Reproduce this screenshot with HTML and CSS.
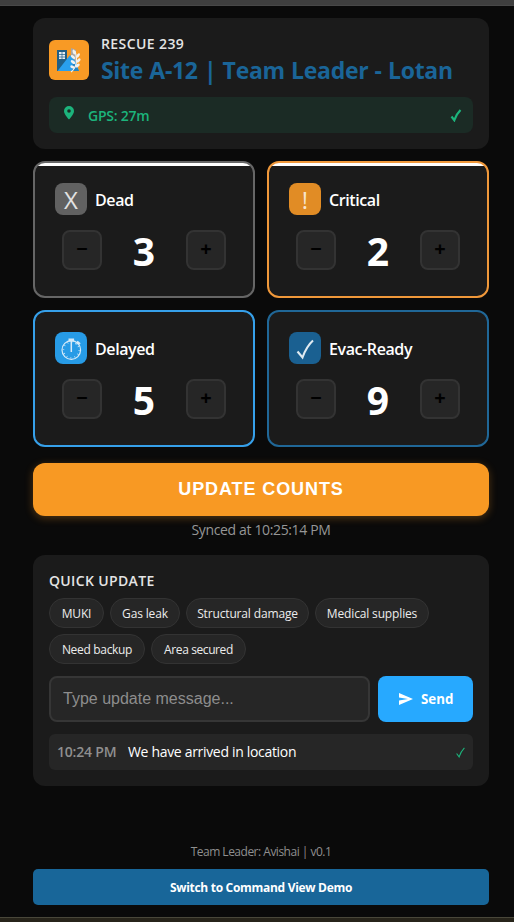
FILE: index.html
```html
<!DOCTYPE html>
<html lang="en">
<head>
<meta charset="utf-8">
<title>Rescue 239</title>
<link rel="stylesheet" href="styles.css">
</head>
<body>
<div class="strip-top"></div>
<main class="app">
  <header class="panel header">
    <div class="brand">
      <svg class="logo" viewBox="0 0 40 40">
        <rect width="40" height="40" rx="6" fill="#f89a25"/>
        <rect x="8" y="10" width="10" height="21" fill="#205f86"/>
        <path d="M10 12h6v7h-6z" fill="#e5edf1"/>
        <path d="M13 12v7M10 14.500h6M10 17h6" stroke="#205f86" stroke-width=".7"/>
        <path d="M22 8l5 2v14l-5-8z" fill="#a9a7a6"/>
        <path d="M8.500 31L21 15l6 7 3 9z" fill="#29a0ee"/>
        <path d="M24 20l6 11h-7z" fill="#2784c0"/>
        <path d="M22 32c5-4 7-11 4-21" fill="none" stroke="#f3f1ee" stroke-width="1.200"/>
        <g fill="#f3f1ee">
          <ellipse cx="25" cy="12" rx="1.300" ry="2.500" transform="rotate(-20 25 12)"/>
          <ellipse cx="24" cy="17" rx="1.400" ry="2.600" transform="rotate(-50 24 17)"/>
          <ellipse cx="29" cy="15.500" rx="1.400" ry="2.600" transform="rotate(35 29 15.500)"/>
          <ellipse cx="24" cy="22" rx="1.400" ry="2.600" transform="rotate(-55 24 22)"/>
          <ellipse cx="29.500" cy="20.500" rx="1.400" ry="2.600" transform="rotate(45 29.500 20.500)"/>
          <ellipse cx="23.500" cy="27" rx="1.400" ry="2.400" transform="rotate(-65 23.500 27)"/>
          <ellipse cx="28.500" cy="25.500" rx="1.400" ry="2.600" transform="rotate(55 28.500 25.500)"/>
        </g>
      </svg>
      <div>
        <div class="unit"><span>RESCUE 239</span></div>
        <h1 class="title">Site A-12 | Team Leader - Lotan</h1>
      </div>
    </div>
    <div class="gps">
      <svg class="pin" viewBox="0 0 10 14"><path fill-rule="evenodd" d="M5 0a5 5 0 0 0-5 5c0 3.600 5 8.500 5 8.500s5-4.900 5-8.500a5 5 0 0 0-5-5zm0 3.200a1.800 1.800 0 1 1 0 3.600 1.800 1.800 0 0 1 0-3.600z" fill="#1cb47c"/></svg>
      <span class="gps-text">GPS: 27m</span>
      <svg class="gps-check" viewBox="0 0 12 13"><path d="M1.500 7.500l2.800 3.700C5.500 7.500 7.500 4 10.500 1" fill="none" stroke="#1cb47c" stroke-width="2.200"/></svg>
    </div>
  </header>

  <section class="grid">
    <article class="card dead lit">
      <div class="card-head"><span class="badge">X</span><span class="label">Dead</span></div>
      <div class="counter"><button class="step">−</button><span class="num">3</span><button class="step">+</button></div>
    </article>
    <article class="card critical lit">
      <div class="card-head"><span class="badge">!</span><span class="label">Critical</span></div>
      <div class="counter"><button class="step">−</button><span class="num">2</span><button class="step">+</button></div>
    </article>
    <article class="card delayed">
      <div class="card-head"><span class="badge">
        <svg width="32" height="32" viewBox="0 0 32 32" fill="none" stroke="#d5eaf8">
          <circle cx="16.300" cy="18" r="9.300" stroke-width="1.200"/>
          <circle cx="16.300" cy="18" r="7.800" stroke-width="1.600" stroke-dasharray=".7 3.384"/>
          <path d="M16.300 8v12" stroke-width="1.500"/>
          <path d="M13.500 8h5.600" stroke-width="2.800"/>
          <path d="M21.500 12.300l2-2" stroke-width="1.200"/>
          <path d="M22 9.500l3 2.500" stroke-width="2.200"/>
        </svg></span><span class="label">Delayed</span></div>
      <div class="counter"><button class="step">−</button><span class="num">5</span><button class="step">+</button></div>
    </article>
    <article class="card evac">
      <div class="card-head"><span class="badge">
        <svg width="32" height="32" viewBox="0 0 32 32"><path d="M8.500 19.500l5 6C16 18.500 19 13 24 8.500" fill="none" stroke="#dfeaf1" stroke-width="2.100"/></svg></span><span class="label">Evac-Ready</span></div>
      <div class="counter"><button class="step">−</button><span class="num">9</span><button class="step">+</button></div>
    </article>
  </section>

  <button class="update">UPDATE COUNTS</button>
  <div class="synced">Synced at 10:25:14 PM</div>

  <section class="panel quick">
    <h2 class="quick-title">QUICK UPDATE</h2>
    <div class="chips">
      <span class="chip c1">MUKI</span><span class="chip c2">Gas leak</span><span class="chip c3">Structural damage</span><span class="chip c4">Medical supplies</span><span class="chip c5">Need backup</span><span class="chip c6">Area secured</span>
    </div>
    <div class="compose">
      <input class="field" placeholder="Type update message...">
      <button class="send"><svg width="14" height="12" viewBox="0 0 14 12"><path d="M0 0l14 6-14 6V7.400L9 6 0 4.600z" fill="#fff"/></svg><span>Send</span></button>
    </div>
    <div class="log">
      <span class="time">10:24 PM</span><span class="msg">We have arrived in location</span>
      <svg class="log-check" width="9" height="11" viewBox="0 0 9 11"><path d="M.6 6.500l2.500 3.400C4.300 6 6 3.300 8.400.8" fill="none" stroke="#1cb47c" stroke-width="1.100"/></svg>
    </div>
  </section>

  <footer class="footer">
    <div class="version">Team Leader: Avishai | v0.1</div>
    <button class="switch">Switch to Command View Demo</button>
  </footer>
</main>
<div class="strip-bottom"></div>
</body>
</html>
```
FILE: styles.css
```css
* { box-sizing: border-box; }
body {
  margin: 0;
  height: 922px;
  overflow: hidden;
  display: flex;
  flex-direction: column;
  background: #0a0a0a;
  color: #fff;
  font-family: "Open Sans", "Noto Sans", sans-serif;
}
button { font-family: inherit; border: 0; padding: 0; }
svg { display: block; }
span, .synced, .version, h1, h2 { white-space: nowrap; }
.strip-top { height: 6px; flex: none; background: #3f3f3f; border-bottom: 1px solid #484848; }
.strip-bottom { height: 5px; flex: none; background: #27241a; border-top: 1px solid #49473a; }
.app { flex: 1; display: flex; flex-direction: column; padding: 12px 25px 12px 33px; }
.panel { background: #1b1b1b; border-radius: 12px; padding: 16px; }

.header { height: 131px; }
.brand { display: flex; align-items: center; gap: 12px; height: 51px; }
.logo { width: 40px; height: 40px; }
.unit { font-size: 14px; line-height: 19px; font-weight: 600; color: #e4e4e4; letter-spacing: .4px; }
.title { margin: 0; padding-top: 2px; font-size: 23px; line-height: 30px; font-weight: 700; color: #1a6598; letter-spacing: -.3px; word-spacing: .6px; }
.gps {
  display: flex;
  align-items: center;
  height: 36px;
  margin-top: 12px;
  padding: 0 11px 0 15px;
  border-radius: 8px;
  background: #1b2b25;
  color: #1cb47c;
}
.pin { width: 10px; height: 14px; margin-bottom: 4px; }
.gps-text { flex: 1; margin: 0 0 0 14px; font-size: 14px; font-weight: 600; letter-spacing: -.25px; }
.gps-check { width: 12px; height: 13px; }

.grid { display: grid; grid-template-columns: 1fr 1fr; gap: 12px; margin-top: 12px; }
.card {
  height: 137px;
  padding: 20px;
  overflow: hidden;
  background: #1b1b1b;
  border: 2px solid;
  border-radius: 12px;
}
.lit { background: linear-gradient(#fff 0 3px, #1b1b1b 3px); }
.dead { border-color: #666; }
.critical { border-color: #f0983a; }
.delayed { border-color: #36a0ea; }
.evac { border-color: #206797; }
.card-head { display: flex; align-items: center; gap: 8px; height: 32px; }
.badge {
  display: flex;
  align-items: center;
  justify-content: center;
  width: 32px;
  height: 32px;
  padding-top: 2px;
  border-radius: 8px;
  font-size: 24px;
  line-height: 30px;
  color: #e2e2e2;
}
.badge svg { margin-top: -2px; }
.dead .badge { background: #616161; }
.critical .badge { background: #e18c25; color: #f8e4cc; }
.delayed .badge { background: #279be6; }
.evac .badge { background: #1a6091; }
.label { margin-top: 1px; font-size: 16px; font-weight: 600; letter-spacing: -.4px; }
.counter { display: flex; justify-content: space-between; align-items: center; width: 164px; height: 40px; margin: 15px 0 0 7px; }
.step {
  width: 40px;
  height: 40px;
  padding-bottom: 2px;
  background: #262626;
  border: 2px solid #333;
  border-radius: 8px;
  font-size: 20px;
  line-height: 20px;
  font-weight: 700;
  color: #000;
}
.num { margin-top: 2px; font-size: 39px; line-height: 40px; font-weight: 700; }

.update {
  height: 53px;
  flex: none;
  margin-top: 16px;
  border-radius: 12px;
  background: #f89923;
  box-shadow: 0 2px 8px rgba(248, 153, 35, .3);
  color: #fff;
  font: 700 18px "Liberation Sans", sans-serif;
  letter-spacing: .9px;
}
.synced { height: 39px; padding-top: 3px; text-align: center; font-size: 14px; line-height: 21px; color: #969696; letter-spacing: -.36px; }

.quick { height: 231px; }
.quick-title { margin: 0; height: 27px; font-size: 14px; line-height: 20px; font-weight: 600; color: #e4e4e4; letter-spacing: .35px; }
.chips { display: flex; flex-wrap: wrap; gap: 6px; }
.chip {
  height: 30px;
  border: 1px solid #333;
  border-radius: 15px;
  background: #262626;
  color: #ececec;
  font-size: 12px;
  line-height: 29px;
  text-align: center;
  letter-spacing: -.15px;
}
.c1 { width: 55px; }
.c2 { width: 70px; }
.c3 { width: 123px; }
.c4 { width: 114px; }
.c5 { width: 96px; letter-spacing: -.32px; }
.c6 { width: 95px; letter-spacing: -.4px; }
.compose { display: flex; gap: 8px; height: 46px; margin-top: 12px; }
.field {
  flex: 1;
  min-width: 0;
  padding: 0 12px;
  background: #262626;
  border: 2px solid #363636;
  border-radius: 8px;
  font: 16px "Liberation Sans", sans-serif;
}
.field::placeholder { color: #8d8d8d; opacity: 1; }
.send {
  display: flex;
  align-items: center;
  gap: 8px;
  width: 95px;
  padding-left: 21px;
  border-radius: 8px;
  background: #27a9ff;
  color: #fff;
  font-size: 13.300px;
  font-weight: 700;
}
.log { display: flex; align-items: center; height: 36px; margin-top: 12px; padding: 0 8px; border-radius: 6px; background: #262626; font-size: 14px; }
.time { width: 71px; margin-bottom: 1px; font-weight: 600; color: #8f8f8f; letter-spacing: -.2px; }
.msg { flex: 1; margin-bottom: 1px; letter-spacing: -.32px; }

.footer { margin-top: auto; }
.version { height: 26px; text-align: center; font-size: 12px; line-height: 17px; color: #8f8f8f; letter-spacing: -.5px; }
.switch { display: block; width: 100%; height: 36px; border-radius: 5px; background: #186699; color: #fff; font-size: 12px; font-weight: 700; letter-spacing: -.3px; }
```
